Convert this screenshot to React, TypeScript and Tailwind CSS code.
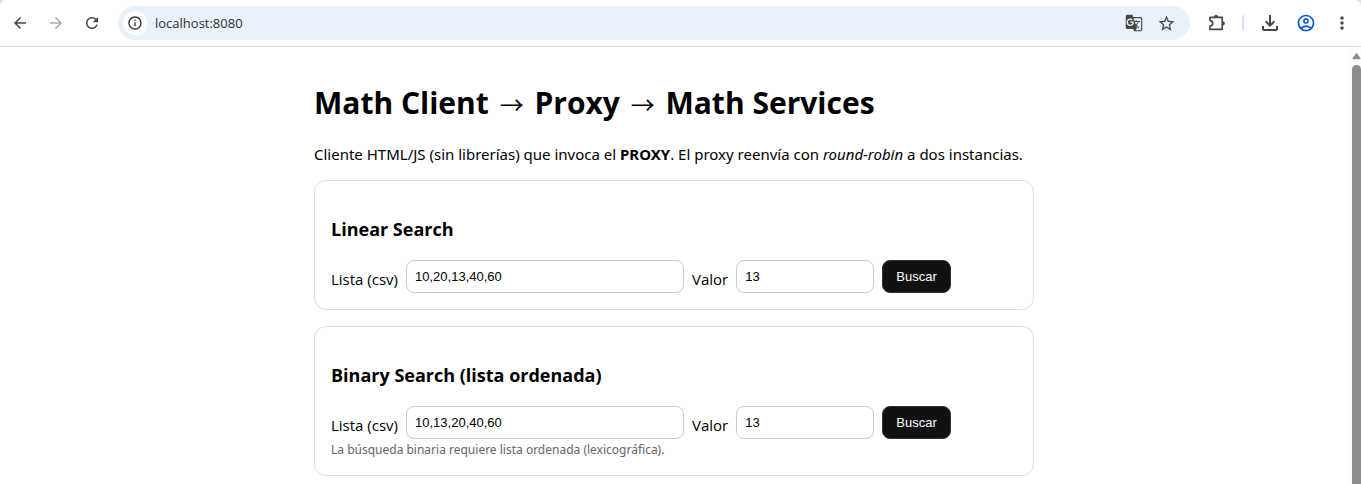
import { useId, type ReactNode } from "react";
import {
  MdArrowBack,
  MdArrowForward,
  MdGTranslate,
  MdInfoOutline,
  MdMoreVert,
  MdOutlineAccountCircle,
  MdOutlineFileDownload,
  MdRefresh,
  MdStarBorder,
} from "react-icons/md";

function ToolButton({ label, children }: { label: string; children: ReactNode }) {
  return (
    <button type="button" aria-label={label} className="flex h-9 w-9 shrink-0 items-center justify-center text-[#474747]">
      {children}
    </button>
  );
}

function PuzzleIcon() {
  return (
    <svg width="20" height="20" viewBox="0 0 20 20" aria-hidden="true">
      <path
        d="M4 4.3H16.2V16.3H4V13a2.7 2.7 0 0 0 0-5.4z"
        fill="none"
        stroke="currentColor"
        strokeWidth="1.7"
        strokeLinejoin="round"
      />
      <path d="M8.2 4a1.9 1.9 0 0 1 3.8 0zM16.8 8.4a1.9 1.9 0 0 1 0 3.8z" fill="currentColor" stroke="currentColor" strokeWidth=".4" />
    </svg>
  );
}

function BrowserBar() {
  return (
    <header className="bg-[#d3e3fd]">
      <div className="flex items-center rounded-t-md border-b border-[#dadce0] bg-white pt-1 pb-1 pl-0.5 pr-px">
        <ToolButton label="Atrás">
          <MdArrowBack size={18} />
        </ToolButton>
        <button type="button" disabled aria-label="Adelante" className="flex h-9 w-9 shrink-0 items-center justify-center text-[#a9a9a9]">
          <MdArrowForward size={18} />
        </button>
        <ToolButton label="Recargar">
          <MdRefresh size={18} />
        </ToolButton>
        <div className="my-0.5 ml-2 flex h-[34px] min-w-0 flex-1 items-center gap-2 rounded-full bg-[#e9f1fa] pl-[5px] pr-2">
          <button type="button" aria-label="Información del sitio" className="flex h-6 w-6 shrink-0 items-center justify-center rounded-full bg-white text-[#303030]">
            <MdInfoOutline size={16} />
          </button>
          <input
            type="text"
            aria-label="Dirección"
            defaultValue="localhost:8080"
            className="min-w-0 flex-1 bg-transparent text-[13px] leading-5 text-[#303030] outline-none"
          />
          <div className="flex">
            <button type="button" aria-label="Traducir" className="flex h-8 w-8 items-center justify-center text-[#474747]">
              <MdGTranslate size={18} />
            </button>
            <button type="button" aria-label="Marcador" className="flex h-8 w-8 items-center justify-center text-[#474747]">
              <MdStarBorder size={19} />
            </button>
          </div>
        </div>
        <div className="ml-2 flex items-center">
          <ToolButton label="Extensiones">
            <PuzzleIcon />
          </ToolButton>
          <span className="mx-2 h-4 w-0.5 rounded-full bg-[#d3e3fd]" />
          <ToolButton label="Descargas">
            <MdOutlineFileDownload size={24} />
          </ToolButton>
          <button type="button" aria-label="Perfil" className="flex h-9 w-9 shrink-0 items-center justify-center text-[#0b57d0]">
            <MdOutlineAccountCircle size={20} />
          </button>
          <ToolButton label="Menú">
            <MdMoreVert size={20} />
          </ToolButton>
        </div>
      </div>
    </header>
  );
}

function SearchCard({ title, list, value, note }: { title: string; list: string; value: string; note?: string }) {
  const id = useId();
  const field =
    "h-[33px] rounded-lg border border-[#cccccc] bg-white px-2 pb-px font-['Liberation_Sans',Arial,sans-serif] text-[13px] text-black outline-none";
  return (
    <section className="rounded-xl border border-[#dddddd] px-4 pt-9 pb-4">
      <h3 className="text-lg leading-6 font-bold">{title}</h3>
      <form className="mt-[19px] flex flex-wrap items-end gap-2" onSubmit={(e) => e.preventDefault()}>
        <label htmlFor={`${id}-list`} className="text-[15px] leading-7">
          Lista (csv)
        </label>
        <input id={`${id}-list`} type="text" defaultValue={list} className={`${field} w-[278px]`} />
        <label htmlFor={`${id}-value`} className="text-[15px] leading-7">
          Valor
        </label>
        <input id={`${id}-value`} type="text" defaultValue={value} className={`${field} w-[138px]`} />
        <button
          type="submit"
          className="h-[33px] rounded-lg border border-[#333333] bg-[#111111] px-[13px] font-['Liberation_Sans',Arial,sans-serif] text-[13px] text-white"
        >
          Buscar
        </button>
      </form>
      {note && <p className="mt-0.5 font-['Noto_Sans',sans-serif] text-xs leading-[18px] text-[#666666]">{note}</p>}
    </section>
  );
}

function Arrow() {
  return <span className="mx-[3px] font-['Noto_Sans_CJK_SC',sans-serif] text-2xl leading-none font-normal">→</span>;
}

export default function App() {
  return (
    <div className="flex h-screen flex-col bg-white font-['Open_Sans','Noto_Sans',sans-serif] text-black">
      <BrowserBar />
      <div className="flex min-h-0 flex-1">
        <main className="min-w-0 flex-1 overflow-hidden">
          <div className="mx-auto flex max-w-[720px] flex-col pt-8">
            <h1 className="text-3xl leading-[48px] font-bold">
              Math Client <Arrow /> Proxy <Arrow /> Math Services
            </h1>
            <p className="mt-4 mb-[15px] font-['Noto_Sans',sans-serif] text-[15px] leading-[22px]">
              Cliente HTML/JS (sin librerías) que invoca el <b>PROXY</b>. El proxy reenvía con <i>round-robin</i> a dos
              instancias.
            </p>
            <div className="flex flex-col gap-4">
              <SearchCard title="Linear Search" list="10,20,13,40,60" value="13" />
              <SearchCard
                title="Binary Search (lista ordenada)"
                list="10,13,20,40,60"
                value="13"
                note="La búsqueda binaria requiere lista ordenada (lexicográfica)."
              />
            </div>
          </div>
        </main>
        <div aria-hidden="true" className="flex w-[13px] flex-col bg-[#fcfcfc] pt-[5px] pl-1">
          <svg width="9" height="8" viewBox="0 0 9 8">
            <path d="M4.5 .8 8.4 6.2a.6.6 0 0 1-.5 1H1.1a.6.6 0 0 1-.5-1z" fill="#8b8b8b" />
          </svg>
          <span className="mt-[5px] flex-1 rounded-t-full bg-[#8b8b8b]" />
        </div>
      </div>
    </div>
  );
}
